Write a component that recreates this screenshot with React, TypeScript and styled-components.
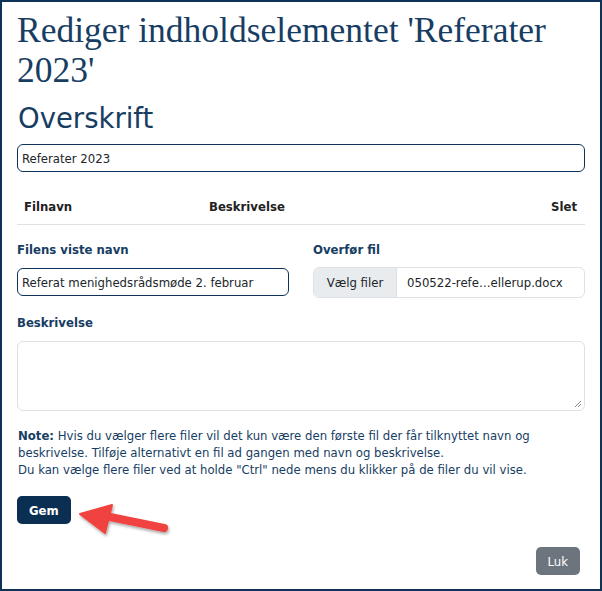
import React from 'react';
import styled, { createGlobalStyle } from 'styled-components';

const GlobalStyle = createGlobalStyle`
  html, body {
    margin: 0;
    padding: 0;
    background: #ffffff;
  }
  * {
    box-sizing: border-box;
  }
`;

const Dialog = styled.div`
  position: relative;
  width: 602px;
  height: 591px;
  border: 2px solid #0d3458;
  padding: 8px 15px 0 15px;
  font-family: "DejaVu Sans Condensed", "DejaVu Sans", sans-serif;
  font-size: 13px;
  color: #212529;
  display: flex;
  flex-direction: column;
`;

const Title = styled.h1`
  margin: 0;
  max-width: 560px;
  font-family: "Liberation Serif", "DejaVu Serif", serif;
  font-weight: 400;
  font-size: 35.5px;
  line-height: 40px;
  color: #173d63;
`;

const Subtitle = styled.h2`
  margin: 10px 0 0 1px;
  font-family: "DejaVu Sans", sans-serif;
  font-weight: 400;
  font-size: 27.5px;
  line-height: 36px;
  color: #173d63;
`;

const TextInput = styled.div<{ $width?: string }>`
  width: ${(p) => p.$width || '100%'};
  height: 28px;
  border: 1px solid #0d3458;
  border-radius: 6px;
  padding: 0 4px;
  display: flex;
  align-items: center;
  white-space: nowrap;
  overflow: hidden;
`;

const TableHead = styled.div`
  margin-top: 27px;
  display: grid;
  grid-template-columns: 185px 1fr auto;
  padding: 0 8px 10px 7px;
  border-bottom: 1px solid #dee2e6;
  font-weight: 700;
  font-size: 13px;
  color: #222;
`;

const Row = styled.div`
  margin-top: 17px;
  display: grid;
  grid-template-columns: 1fr 1fr;
  column-gap: 24px;
`;

const Field = styled.div`
  display: flex;
  flex-direction: column;
  gap: 10px;
`;

const Label = styled.label`
  font-weight: 700;
  font-size: 13px;
  color: #173d63;
  line-height: 16px;
`;

const FileInput = styled.div`
  height: 31px;
  border: 1px solid #dee2e6;
  border-radius: 6px;
  display: flex;
  overflow: hidden;
  margin-top: -1px;
`;

const FileButton = styled.span`
  width: 83px;
  background: #e9ecef;
  border-right: 1px solid #dee2e6;
  display: flex;
  align-items: center;
  justify-content: center;
  color: #212529;
`;

const FileName = styled.span`
  flex: 1;
  display: flex;
  align-items: center;
  padding-left: 10px;
  white-space: nowrap;
`;

const TextArea = styled.div`
  position: relative;
  height: 70px;
  border: 1px solid #dee2e6;
  border-radius: 6px;
`;

const Grip = styled.svg`
  position: absolute;
  right: 2px;
  bottom: 2px;
`;

const Note = styled.p`
  margin: 16px 0 0 1px;
  line-height: 17px;
  color: #173d63;
  b {
    font-weight: 700;
  }
`;

const Button = styled.button<{ $variant: 'primary' | 'secondary' }>`
  border: none;
  border-radius: 5px;
  font-family: inherit;
  font-size: 13px;
  font-weight: ${(p) => (p.$variant === 'primary' ? 700 : 400)};
  color: #ffffff;
  background: ${(p) => (p.$variant === 'primary' ? '#0b2f52' : '#6c757d')};
  height: 28px;
  padding: 0 12px;
`;

const Actions = styled.div`
  margin-top: 18px;
`;

const Footer = styled.div`
  margin-top: auto;
  margin-bottom: 14px;
  display: flex;
  justify-content: flex-end;
  padding-right: 5px;
`;

const Arrow = styled.svg`
  position: absolute;
  left: 70px;
  top: 495px;
  overflow: visible;
`;

function App() {
  return (
    <>
      <GlobalStyle />
      <Dialog>
        <Title>Rediger indholdselementet 'Referater 2023'</Title>
        <Subtitle>Overskrift</Subtitle>
        <TextInput style={{ marginTop: 8 }}>Referater 2023</TextInput>

        <TableHead>
          <span>Filnavn</span>
          <span>Beskrivelse</span>
          <span>Slet</span>
        </TableHead>

        <Row>
          <Field>
            <Label>Filens viste navn</Label>
            <TextInput>Referat menighedsrådsmøde 2. februar</TextInput>
          </Field>
          <Field>
            <Label>Overfør fil</Label>
            <FileInput>
              <FileButton>Vælg filer</FileButton>
              <FileName>050522-refe…ellerup.docx</FileName>
            </FileInput>
          </Field>
        </Row>

        <Field style={{ marginTop: 17 }}>
          <Label>Beskrivelse</Label>
          <TextArea>
            <Grip width="9" height="9" viewBox="0 0 9 9">
              <path d="M8 2 L2 8 M8 5 L5 8" stroke="#888" strokeWidth="1" />
            </Grip>
          </TextArea>
        </Field>

        <Note>
          <b>Note:</b> Hvis du vælger flere filer vil det kun være den første fil der får tilknyttet navn og
          beskrivelse. Tilføje alternativt en fil ad gangen med navn og beskrivelse.
          <br />
          Du kan vælge flere filer ved at holde "Ctrl" nede mens du klikker på de filer du vil vise.
        </Note>

        <Actions>
          <Button $variant="primary">Gem</Button>
        </Actions>

        <Footer>
          <Button $variant="secondary">Luk</Button>
        </Footer>

        <Arrow width="100" height="50" viewBox="0 0 100 50">
          <defs>
            <filter id="shadow" x="-20%" y="-40%" width="140%" height="180%">
              <feDropShadow dx="1" dy="2" stdDeviation="1.5" floodColor="#000" floodOpacity="0.35" />
            </filter>
          </defs>
          <g filter="url(#shadow)">
            <line x1="92" y1="31" x2="38" y2="20" stroke="#f0433f" strokeWidth="8" strokeLinecap="round" />
            <path d="M8 17 L40 8 L33 36 Z" fill="#f0433f" stroke="#f0433f" strokeWidth="2" strokeLinejoin="round" />
          </g>
        </Arrow>
      </Dialog>
    </>
  );
}

export default App;
